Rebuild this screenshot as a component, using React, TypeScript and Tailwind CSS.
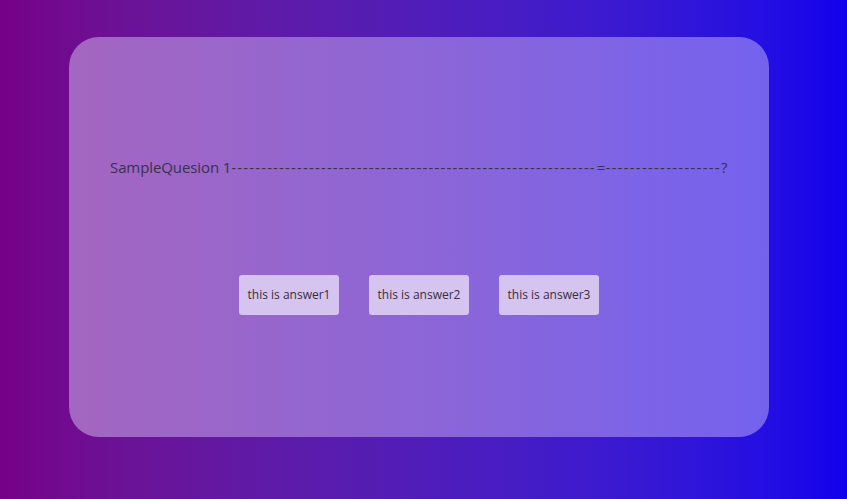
export default function App() {
  const answers = ["this is answer1", "this is answer2", "this is answer3"];
  return (
    <div className="h-[499px] w-full overflow-hidden bg-gradient-to-r from-[#760088] to-[#1100ec] pt-[37px] pl-[69px] font-['Open_Sans','Noto_Sans',sans-serif]">
      <div className="flex h-[400px] w-[700px] flex-col rounded-[30px] bg-gradient-to-r from-[#a466c0] to-[#7462ee]">
        <p className="mt-[119px] pl-[41px] text-[15px] leading-[22px] text-[#3b3050]">
          <span className="tracking-[-0.1px]">SampleQuesion 1</span>
          <span className="tracking-[1.15px]">{"-".repeat(61)}</span>
          <span className="pl-[1px]">=</span>
          <span className="tracking-[1.25px]">{"-".repeat(19)}</span>?
        </p>
        <div className="mt-[97px] flex justify-center gap-[30px]">
          {answers.map((a) => (
            <button
              key={a}
              className="h-[40px] w-[100px] rounded-[3px] bg-[#d4c4ef] text-[12px] text-[#3a2d3d]"
            >
              {a}
            </button>
          ))}
        </div>
      </div>
    </div>
  );
}
